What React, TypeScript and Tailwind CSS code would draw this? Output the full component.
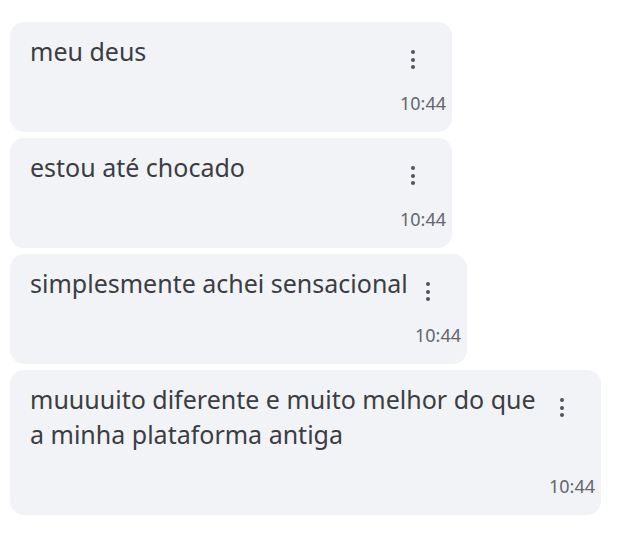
import React from "react";

type Msg = { text: string; time: string; width: string; nowrap?: boolean };

const messages: Msg[] = [
  { text: "meu deus", time: "10:44", width: "w-[442px]", nowrap: true },
  { text: "estou até chocado", time: "10:44", width: "w-[442px]", nowrap: true },
  { text: "simplesmente achei sensacional", time: "10:44", width: "w-[457px]", nowrap: true },
  {
    text: "muuuuito diferente e muito melhor do que a minha plataforma antiga",
    time: "10:44",
    width: "w-[591px]",
  },
];

function Dots() {
  return (
    <div className="flex flex-col items-center gap-[3.5px] pt-[16px]" aria-hidden="true">
      <span className="block w-[4px] h-[4px] rounded-full bg-[#50535a]" />
      <span className="block w-[4px] h-[4px] rounded-full bg-[#50535a]" />
      <span className="block w-[4px] h-[4px] rounded-full bg-[#50535a]" />
    </div>
  );
}

function Bubble({ msg }: { msg: Msg }) {
  return (
    <div
      className={`${msg.width} rounded-[14px] bg-[#f1f3f7] pl-5 pr-[6px] pt-[12px] pb-[19px] flex flex-col`}
    >
      <div className="flex items-start">
        <p
          className={`flex-1 min-w-0 text-[25px] leading-[35px] text-[#3b3d42] ${
            msg.nowrap ? "whitespace-nowrap" : ""
          }`}
        >
          {msg.text}
        </p>
        <div className="w-[20px] mr-[23px] flex justify-center">
          <Dots />
        </div>
      </div>
      <span className="self-end mt-[24px] text-[18px] leading-[20px] text-[#64676d]">
        {msg.time}
      </span>
    </div>
  );
}

export default function App() {
  return (
    <div className="w-[630px] h-[540px] bg-white pt-[22px] pl-[10px] flex flex-col gap-[6px] font-['Noto_Sans',sans-serif]">
      {messages.map((m, i) => (
        <Bubble key={i} msg={m} />
      ))}
    </div>
  );
}
